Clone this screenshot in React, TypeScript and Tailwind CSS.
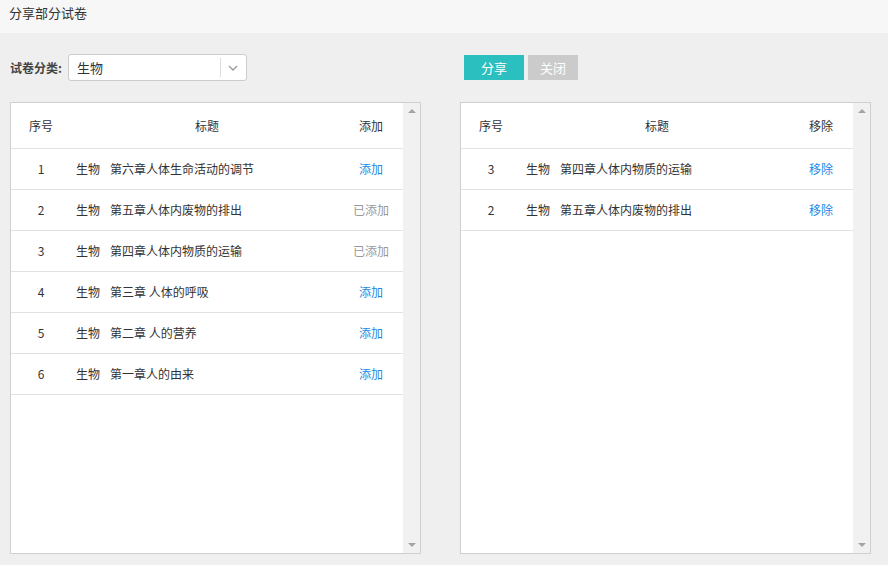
import React from 'react';

const font = { fontFamily: '"Noto Sans CJK SC", "Noto Sans", sans-serif' };

const leftRows = [
  { n: 1, t: '第六章人体生命活动的调节', added: false },
  { n: 2, t: '第五章人体内废物的排出', added: true },
  { n: 3, t: '第四章人体内物质的运输', added: true },
  { n: 4, t: '第三章 人体的呼吸', added: false },
  { n: 5, t: '第二章 人的营养', added: false },
  { n: 6, t: '第一章人的由来', added: false },
];

const rightRows = [
  { n: 3, t: '第四章人体内物质的运输' },
  { n: 2, t: '第五章人体内废物的排出' },
];

const Scrollbar = () => (
  <div className="w-[17px] bg-[#f1f1f1] flex flex-col justify-between items-center py-[6px]">
    <div className="w-0 h-0 border-l-[4px] border-r-[4px] border-b-[4px] border-l-transparent border-r-transparent border-b-[#a3a3a3]" />
    <div className="w-0 h-0 border-l-[4px] border-r-[4px] border-t-[4px] border-l-transparent border-r-transparent border-t-[#a3a3a3]" />
  </div>
);

const Table = ({ action, rows }: { action: string; rows: { n: number; t: string; a: React.ReactNode }[] }) => (
  <div className="flex-1 flex border border-[#cfcfcf] bg-white h-[452px]">
    <div className="flex-1">
      <div className="flex items-center h-[46px] border-b border-[#e2e2e2] text-[12px] text-[#333]">
        <div className="w-[60px] text-center">序号</div>
        <div className="flex-1 text-center">标题</div>
        <div className="w-[60px] text-center pr-[4px]">{action}</div>
      </div>
      {rows.map((r, i) => (
        <div key={i} className="flex items-center h-[41px] border-b border-[#e2e2e2] text-[12px] text-[#333]">
          <div className="w-[60px] text-center">{r.n}</div>
          <div className="flex-1 pl-[5px]">生物<span className="ml-[10px]">{r.t}</span></div>
          <div className="w-[60px] text-center pr-[4px]">{r.a}</div>
        </div>
      ))}
    </div>
    <Scrollbar />
  </div>
);

export default function App() {
  return (
    <div className="w-[888px] h-[565px] bg-[#efefef] text-[#333]" style={font}>
      <div className="h-[33px] bg-[#f7f7f7] flex items-center pl-[9px] text-[13px] text-[#333] pb-[8px]">分享部分试卷</div>
      <div className="flex px-[10px] pt-[21px]">
        <div className="flex-1 flex items-center">
          <span className="text-[12px] font-bold text-[#444]">试卷分类:</span>
          <div className="ml-[6px] w-[179px] h-[27px] bg-white border border-[#ccc] rounded-[3px] flex items-center">
            <span className="flex-1 pl-[8px] text-[13px]">生物</span>
            <div className="w-[26px] h-[19px] border-l border-[#ddd] flex items-center justify-center">
              <svg width="10" height="6" viewBox="0 0 10 6"><path d="M1 1l4 4 4-4" fill="none" stroke="#999" strokeWidth="1.3" /></svg>
            </div>
          </div>
        </div>
        <div className="w-[40px]" />
        <div className="flex-1 flex items-center gap-[4px]">
          <button className="w-[60px] h-[25px] bg-[#2bbfbf] text-white text-[13px]">分享</button>
          <button className="w-[50px] h-[25px] bg-[#cbcbcb] text-white text-[13px]">关闭</button>
        </div>
      </div>
      <div className="flex gap-[39px] px-[10px] pt-[21px] pr-[17px]">
        <Table
          action="添加"
          rows={leftRows.map(r => ({ n: r.n, t: r.t, a: r.added ? <span className="text-[#999]">已添加</span> : <span className="text-[#1e88e5]">添加</span> }))}
        />
        <Table
          action="移除"
          rows={rightRows.map(r => ({ n: r.n, t: r.t, a: <span className="text-[#1e88e5]">移除</span> }))}
        />
      </div>
    </div>
  );
}
